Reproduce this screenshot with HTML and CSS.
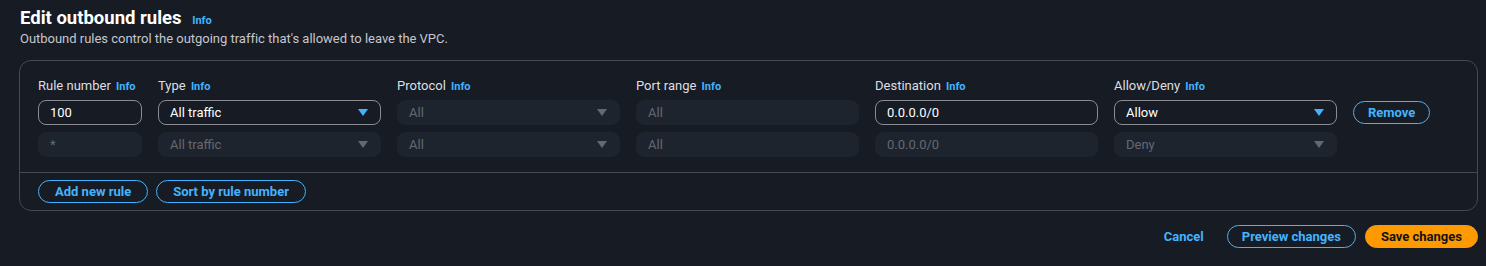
FILE: index.html
```html
<!DOCTYPE html>
<html lang="en">
<head>
    <meta charset="UTF-8">
    <meta name="viewport" content="width=device-width, initial-scale=1.0">
    <title>Edit outbound rules</title>
    <link rel="stylesheet" href="styles.css">
</head>
<body>

    <header class="page-header">
        <h1>Edit outbound rules <a class="info" href="#">Info</a></h1>
        <p>Outbound rules control the outgoing traffic that's allowed to leave the VPC.</p>
    </header>

    <section class="container">
        <div class="rules">
            <div class="row labels">
                <div class="col col-num">Rule number <a class="info" href="#">Info</a></div>
                <div class="col">Type <a class="info" href="#">Info</a></div>
                <div class="col">Protocol <a class="info" href="#">Info</a></div>
                <div class="col">Port range <a class="info" href="#">Info</a></div>
                <div class="col">Destination <a class="info" href="#">Info</a></div>
                <div class="col">Allow/Deny <a class="info" href="#">Info</a></div>
            </div>

            <div class="row">
                <div class="col col-num"><div class="field">100</div></div>
                <div class="col"><div class="field select">All traffic<span class="caret"></span></div></div>
                <div class="col"><div class="field disabled select">All<span class="caret"></span></div></div>
                <div class="col"><div class="field disabled">All</div></div>
                <div class="col"><div class="field">0.0.0.0/0</div></div>
                <div class="col"><div class="field select">Allow<span class="caret"></span></div></div>
                <button class="btn">Remove</button>
            </div>

            <div class="row">
                <div class="col col-num"><div class="field disabled">*</div></div>
                <div class="col"><div class="field disabled select">All traffic<span class="caret"></span></div></div>
                <div class="col"><div class="field disabled select">All<span class="caret"></span></div></div>
                <div class="col"><div class="field disabled">All</div></div>
                <div class="col"><div class="field disabled">0.0.0.0/0</div></div>
                <div class="col"><div class="field disabled select">Deny<span class="caret"></span></div></div>
            </div>
        </div>

        <div class="container-footer">
            <button class="btn">Add new rule</button>
            <button class="btn">Sort by rule number</button>
        </div>
    </section>

    <footer class="actions">
        <a class="link-btn" href="#">Cancel</a>
        <button class="btn">Preview changes</button>
        <button class="btn primary">Save changes</button>
    </footer>

</body>
</html>
```

FILE: styles.css
```css
* {
    margin: 0;
    padding: 0;
    box-sizing: border-box;
}

body {
    font-family: Roboto, "Open Sans", sans-serif;
    background-color: #161b24;
    color: #dedee3;
    font-size: 14px;
    line-height: 20px;
    padding: 7px 9px 0 19px;
}

a {
    text-decoration: none;
}

.info {
    color: #42b4ff;
    font-size: 11px;
    font-weight: 700;
    line-height: 1;
    margin-left: 2px;
}

/* Header */
.page-header h1 {
    font-size: 18.5px;
    font-weight: 700;
    line-height: 22px;
    color: #ffffff;
    padding-left: 1px;
}

.page-header h1 .info {
    margin-left: 6px;
}

.page-header p {
    color: #c6c6cd;
    font-size: 13px;
    line-height: 20px;
    letter-spacing: -0.02px;
    padding-left: 1px;
}

/* Container */
.container {
    margin-top: 11px;
    border: 1px solid #424a55;
    border-radius: 12px;
    width: 1459px;
}

.rules {
    padding: 15px 18px 15px 18px;
}

.row {
    display: flex;
    gap: 16px;
    align-items: center;
    margin-bottom: 7px;
}

.row:last-child {
    margin-bottom: 0;
}

.labels {
    margin-bottom: 4px;
    font-size: 13px;
    color: #dedee3;
}

.col {
    width: 223px;
    flex: none;
}

.col-num {
    width: 104px;
}

.field {
    height: 25px;
    border: 1px solid #8c8c94;
    border-radius: 8px;
    padding: 0 11px;
    display: flex;
    align-items: center;
    justify-content: space-between;
    font-size: 13px;
    color: #ffffff;
    background-color: #161b24;
}

.field.disabled {
    border-color: #1e242d;
    background-color: #1e242d;
    color: #656871;
}

.caret {
    width: 0;
    height: 0;
    border-left: 5px solid transparent;
    border-right: 5px solid transparent;
    border-top: 7px solid #42b4ff;
    margin-right: 1px;
}

.field.disabled .caret {
    border-top-color: #656871;
}

/* Buttons */
.btn {
    font-family: inherit;
    font-size: 13px;
    font-weight: 700;
    line-height: 21px;
    color: #42b4ff;
    background: transparent;
    border: 1px solid #42b4ff;
    border-radius: 20px;
    padding: 0 16px;
    cursor: pointer;
}

.row .btn {
    padding: 0 14px;
}

.container-footer {
    border-top: 1px solid #424a55;
    padding: 7px 18px 7px 18px;
    display: flex;
    gap: 8px;
}

.actions {
    margin-top: 14px;
    width: 1459px;
    display: flex;
    justify-content: flex-end;
    align-items: center;
    gap: 9px;
}

.actions .btn {
    padding: 0 14px;
}

.link-btn {
    color: #42b4ff;
    font-size: 13px;
    font-weight: 700;
    margin-right: 14px;
}

.actions .btn.primary {
    background-color: #ff9900;
    border-color: #ff9900;
    color: #0f141a;
    padding: 0 15px;
}
```
